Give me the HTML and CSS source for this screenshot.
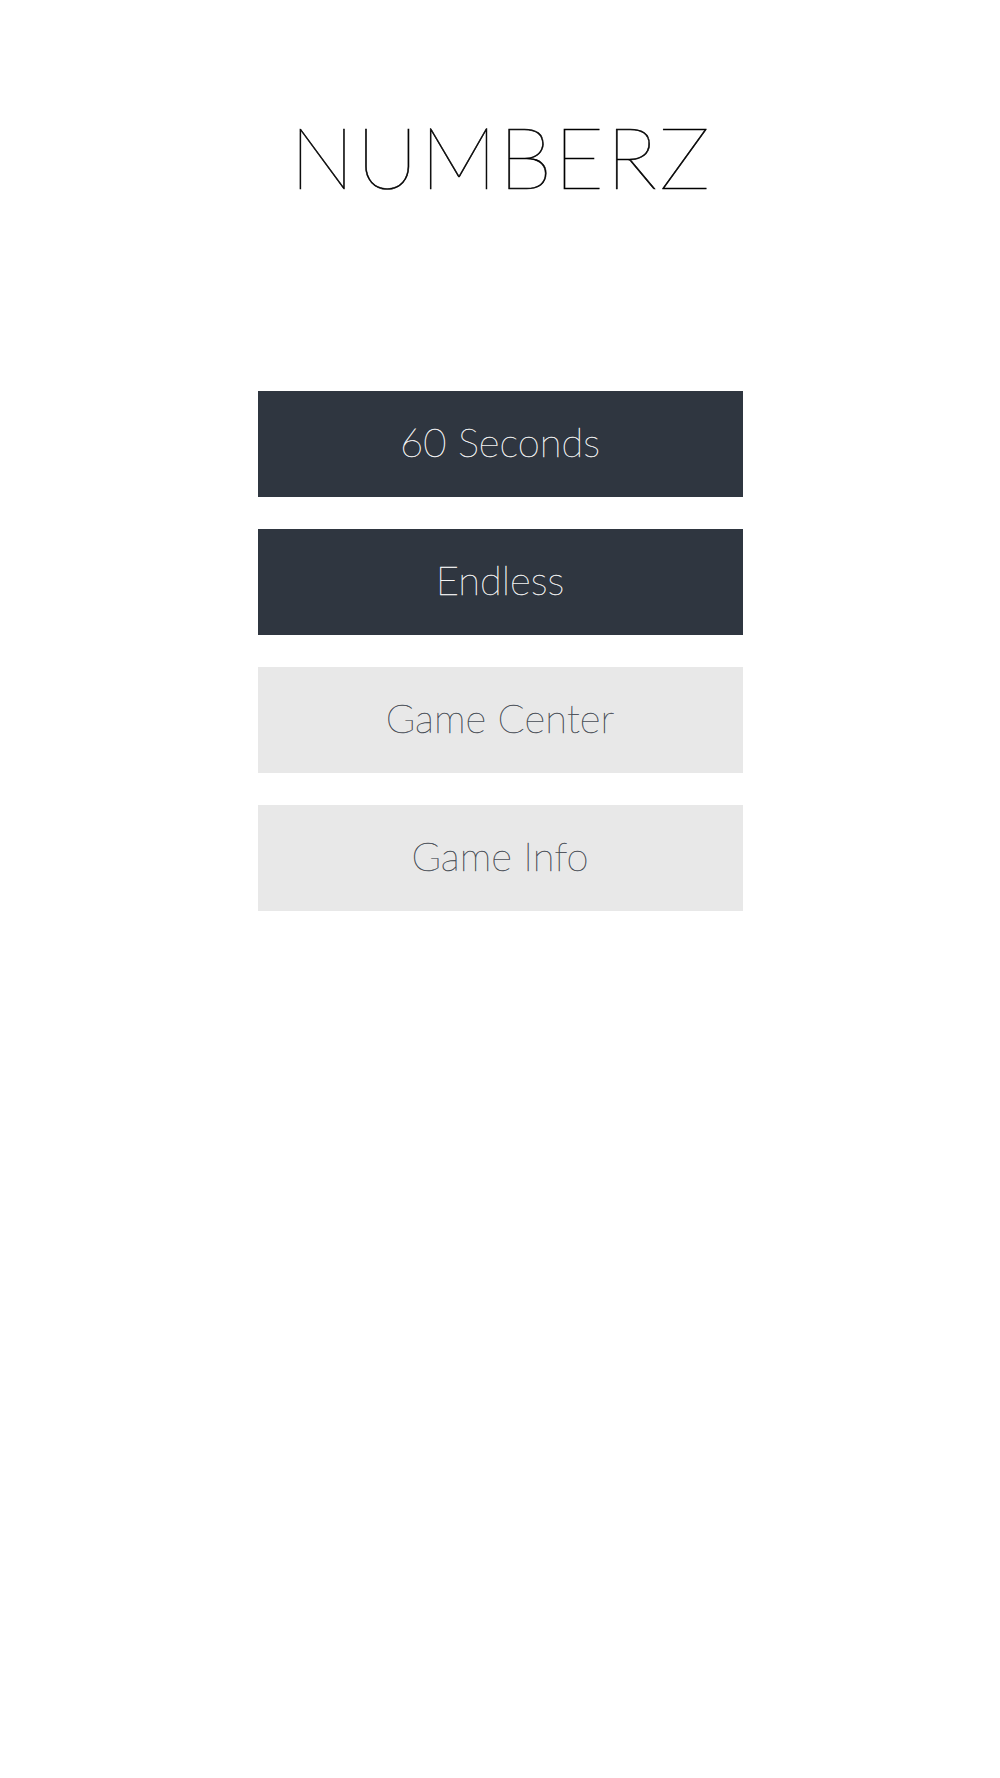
FILE: index.html
```html
<!DOCTYPE html>
<html lang="en">

<head>
  <meta charset="UTF-8">
  <meta name="viewport" content="width=device-width, initial-scale=1.0">
  <title>NUMBERZ</title>

  <link rel="stylesheet" href="styles.css">
</head>

<body>
  <div class="screen">
    <h1 class="title">NUMBERZ</h1>

    <div class="menu">
      <button class="btn btn-dark">60 Seconds</button>
      <button class="btn btn-dark">Endless</button>
      <button class="btn btn-light">Game Center</button>
      <button class="btn btn-light">Game Info</button>
    </div>
  </div>
</body>

</html>
```

FILE: styles.css
```css
body {
  margin: 0;
  background-color: #FFF;
  font-family: "Lato", "Inter", "Noto Sans", sans-serif;
}

.screen {
  display: flex;
  flex-direction: column;
  align-items: center;
  min-height: 1778px;
}

.title {
  margin: 106px 0 0;
  padding-left: 2px;
  font-size: 86px;
  font-weight: 100;
  line-height: 100px;
  letter-spacing: 2px;
  color: #000;
  -webkit-text-stroke: 0.6px #000;
}

.menu {
  display: flex;
  flex-direction: column;
  gap: 32px;
  margin-top: 185px;
  width: 485px;
}

.btn {
  height: 106px;
  padding: 0 0 5px;
  border: none;
  font-family: inherit;
  font-size: 40px;
  font-weight: 100;
  cursor: pointer;
}

.btn-dark {
  background-color: #2f3640;
  color: #f4f4f4;
  -webkit-text-stroke: 0.4px #f4f4f4;
}

.btn-light {
  background-color: #e8e8e8;
  color: #474c54;
  -webkit-text-stroke: 0.4px #474c54;
}
```
